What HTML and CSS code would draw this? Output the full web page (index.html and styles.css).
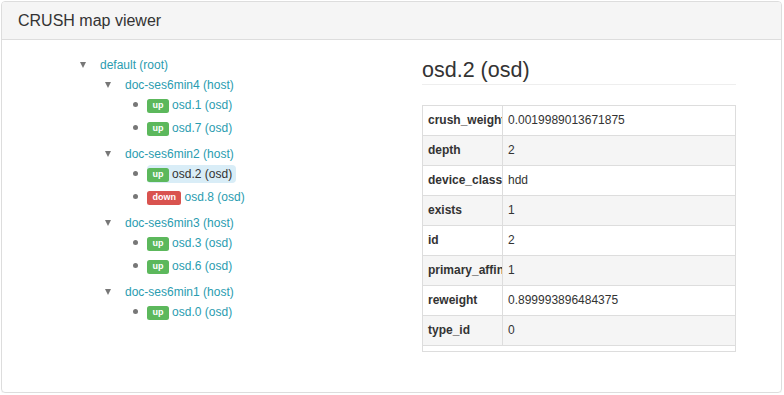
FILE: index.html
```html
<!DOCTYPE html>
<html>

<head>
    <meta charset="utf-8" />
    <title>CRUSH map viewer</title>
    <link rel="stylesheet" href="styles.css">
</head>

<body>
    <div class="panel">
        <div class="panel-heading">
            <h3 class="panel-title">CRUSH map viewer</h3>
        </div>
        <div class="panel-body">
            <div class="tree-col">
                <ul class="tree">
                    <li>
                        <div class="row"><span class="caret"></span><a class="node">default (root)</a></div>
                        <ul class="hosts">
                            <li>
                                <div class="row"><span class="caret"></span><a class="node">doc-ses6min4 (host)</a></div>
                                <ul class="leaves">
                                    <li class="leaf"><span class="dot"></span><a class="node"><span class="label up">up</span> osd.1 (osd)</a></li>
                                    <li class="leaf"><span class="dot"></span><a class="node"><span class="label up">up</span> osd.7 (osd)</a></li>
                                </ul>
                            </li>
                            <li>
                                <div class="row"><span class="caret"></span><a class="node">doc-ses6min2 (host)</a></div>
                                <ul class="leaves">
                                    <li class="leaf"><span class="dot"></span><a class="node selected"><span class="label up">up</span> osd.2 (osd)</a></li>
                                    <li class="leaf"><span class="dot"></span><a class="node"><span class="label down">down</span> osd.8 (osd)</a></li>
                                </ul>
                            </li>
                            <li>
                                <div class="row"><span class="caret"></span><a class="node">doc-ses6min3 (host)</a></div>
                                <ul class="leaves">
                                    <li class="leaf"><span class="dot"></span><a class="node"><span class="label up">up</span> osd.3 (osd)</a></li>
                                    <li class="leaf"><span class="dot"></span><a class="node"><span class="label up">up</span> osd.6 (osd)</a></li>
                                </ul>
                            </li>
                            <li>
                                <div class="row"><span class="caret"></span><a class="node">doc-ses6min1 (host)</a></div>
                                <ul class="leaves">
                                    <li class="leaf"><span class="dot"></span><a class="node"><span class="label up">up</span> osd.0 (osd)</a></li>
                                </ul>
                            </li>
                        </ul>
                    </li>
                </ul>
            </div>
            <div class="detail-col">
                <h3 class="page-header">osd.2 (osd)</h3>
                <table class="props">
                    <tbody>
                        <tr><th>crush_weight</th><td>0.0019989013671875</td></tr>
                        <tr><th>depth</th><td>2</td></tr>
                        <tr><th>device_class</th><td>hdd</td></tr>
                        <tr><th>exists</th><td>1</td></tr>
                        <tr><th>id</th><td>2</td></tr>
                        <tr><th>primary_affinity</th><td>1</td></tr>
                        <tr><th>reweight</th><td>0.899993896484375</td></tr>
                        <tr><th>type_id</th><td>0</td></tr>
                        <tr class="filler"><td colspan="2"></td></tr>
                    </tbody>
                </table>
            </div>
        </div>
    </div>
</body>

</html>
```

FILE: styles.css
```css
body {
    margin: 1px 2px 0 1px;
    font-family: "Liberation Sans", Arial, sans-serif;
    font-size: 12px;
    color: #333;
    background: #fff;
}

.panel {
    border: 1px solid #ddd;
    border-radius: 4px;
    box-shadow: 0 1px 1px rgba(0, 0, 0, .05);
    box-sizing: border-box;
    height: 392px;
}

.panel-heading {
    background-color: #f5f5f5;
    border-bottom: 1px solid #ddd;
    border-radius: 3px 3px 0 0;
    padding: 10px 15px 10px 16px;
}

.panel-title {
    margin: 0;
    font-size: 16px;
    font-weight: normal;
    line-height: 17px;
    color: #333;
}

.panel-body {
    display: grid;
    grid-template-columns: 1fr 314px;
    padding: 15px 45px 15px 15px;
}

/* tree */

.tree,
.tree ul {
    list-style: none;
    margin: 0;
    padding: 0;
}

.tree {
    padding-left: 63px;
}

.tree .hosts {
    padding-left: 25px;
}

.tree .leaves {
    padding-left: 28px;
    margin-bottom: 3px;
}

.row {
    display: flex;
    align-items: center;
    height: 20px;
}

.leaf {
    display: flex;
    align-items: flex-start;
    height: 23px;
}

.leaf .dot {
    margin-top: 7px;
}

.caret {
    width: 0;
    height: 0;
    border-left: 3.5px solid transparent;
    border-right: 3.5px solid transparent;
    border-top: 6px solid #777;
    margin-right: 14px;
}

.dot {
    width: 5px;
    height: 5px;
    border-radius: 50%;
    background: #777;
    margin-right: 9px;
}

.node {
    color: #2a9cb0;
    text-decoration: none;
    line-height: 16px;
    white-space: nowrap;
}

.leaf .node {
    padding: 1px 4px 1px 0;
    margin-top: 1px;
    border-radius: 4px;
}

.node.selected {
    background: #d9edf7;
    color: #333;
}

.label {
    display: inline-block;
    font-size: 9px;
    font-weight: bold;
    line-height: 1;
    color: #fff;
    padding: 2.5px 5.4px 2.5px;
    border-radius: 2.5px;
    vertical-align: 1px;
}

.label.up {
    background-color: #5cb85c;
}

.label.down {
    background-color: #d9534f;
}

/* details */

.page-header {
    margin: 3px 0 20px;
    padding-bottom: 2px;
    border-bottom: 1px solid #eee;
    font-size: 21.5px;
    font-weight: normal;
    line-height: 24px;
    color: #333;
}

.props {
    width: 100%;
    border-collapse: collapse;
    border: 1px solid #ddd;
    table-layout: fixed;
}

.props th,
.props td {
    border: 1px solid #ddd;
    padding: 5px;
    line-height: 19px;
    text-align: left;
    white-space: nowrap;
    overflow: hidden;
}

.props th {
    width: 69px;
    font-weight: bold;
    text-overflow: clip;
}

.props tr:nth-child(even) {
    background: #f5f5f5;
}

.props .filler td {
    padding: 0;
    height: 5px;
    line-height: 5px;
}
```
